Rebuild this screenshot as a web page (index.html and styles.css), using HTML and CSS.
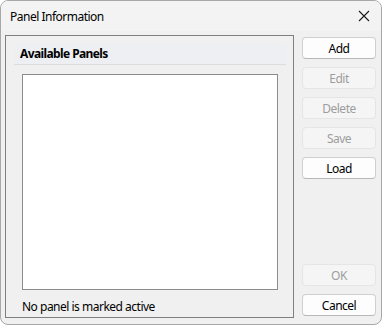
FILE: index.html
```html
<!DOCTYPE html>
<html lang="en">
<head>
    <meta charset="UTF-8">
    <meta name="viewport" content="width=device-width, initial-scale=1.0">
    <title>Panel Information</title>
    <link rel="stylesheet" href="styles.css">
</head>
<body>
    <div class="window">
        <div class="titlebar">
            <span class="title">Panel Information</span>
            <span class="close">
                <svg width="12" height="12" viewBox="0 0 12 12">
                    <path d="M1 1 L11 11 M11 1 L1 11" stroke="#1a1a1a" stroke-width="1.1" fill="none"/>
                </svg>
            </span>
        </div>
        <div class="content">
            <div class="panel">
                <div class="panel-header">Available Panels</div>
                <div class="list"></div>
                <div class="status">No panel is marked active</div>
            </div>
            <div class="buttons">
                <button class="btn">Add</button>
                <button class="btn" disabled>Edit</button>
                <button class="btn" disabled>Delete</button>
                <button class="btn" disabled>Save</button>
                <button class="btn">Load</button>
                <div class="spacer"></div>
                <button class="btn" disabled>OK</button>
                <button class="btn">Cancel</button>
            </div>
        </div>
    </div>
</body>
</html>
```

FILE: styles.css
```css
html, body {
    margin: 0;
    padding: 0;
    background: #ffffff;
}

body {
    font-family: "Noto Sans", "Open Sans", sans-serif;
    font-size: 12px;
    color: #000;
    letter-spacing: -0.5px;
}

.window {
    width: 382px;
    height: 325px;
    box-sizing: border-box;
    border: 1px solid #a8a8a8;
    border-radius: 8px;
    background: #f0f0f0;
    overflow: hidden;
    display: flex;
    flex-direction: column;
}

.titlebar {
    height: 30px;
    background: #f3f3f3;
    display: flex;
    align-items: center;
    justify-content: space-between;
    padding: 0 11px 0 9px;
    flex-shrink: 0;
}

.title {
    font-size: 12px;
}

.close {
    display: flex;
    width: 12px;
    height: 12px;
}

.content {
    flex: 1;
    display: flex;
    padding: 4px 5px 6px 4px;
    gap: 8px;
}

.panel {
    width: 289px;
    box-sizing: border-box;
    border: 1px solid #7f7f7f;
    display: flex;
    flex-direction: column;
    padding: 8px 7px 0 8px;
}

.panel-header {
    height: 20px;
    line-height: 20px;
    background: #eeeff2;
    border-bottom: 1px solid #dddde0;
    font-weight: bold;
    padding-left: 6px;
    letter-spacing: -0.6px;
}

.list {
    height: 214px;
    margin: 9px 8px 0 8px;
    background: #fff;
    border: 1px solid #8c8c8c;
}

.status {
    padding: 8px 0 0 8px;
}

.buttons {
    display: flex;
    flex-direction: column;
    gap: 8px;
    padding-top: 2px;
    padding-bottom: 2px;
}

.btn {
    width: 74px;
    height: 22px;
    box-sizing: border-box;
    border: 1px solid #cfcfcf;
    border-bottom-color: #b8b8b8;
    border-radius: 4px;
    background: #fdfdfd;
    font-family: inherit;
    font-size: 12px;
    letter-spacing: inherit;
    color: #000;
    padding: 0;
}

.btn:disabled {
    background: #f5f5f5;
    border-color: #e5e5e5;
    color: #9d9d9d;
}

.spacer {
    flex: 1;
}
```
